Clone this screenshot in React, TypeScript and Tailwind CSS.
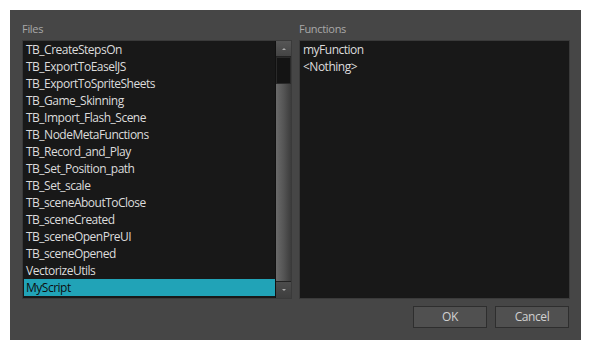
import React from "react";

const files = [
  "TB_CreateStepsOn",
  "TB_ExportToEaselJS",
  "TB_ExportToSpriteSheets",
  "TB_Game_Skinning",
  "TB_Import_Flash_Scene",
  "TB_NodeMetaFunctions",
  "TB_Record_and_Play",
  "TB_Set_Position_path",
  "TB_Set_scale",
  "TB_sceneAboutToClose",
  "TB_sceneCreated",
  "TB_sceneOpenPreUI",
  "TB_sceneOpened",
  "VectorizeUtils",
  "MyScript",
];

export default function App() {
  return (
    <div className="w-[591px] h-[351px] bg-white p-[10px]" style={{ fontFamily: '"Open Sans", "Noto Sans", sans-serif' }}>
      <div className="w-[571px] h-[330px] bg-[#464646] pt-[12px] pl-[12px] pr-[11px] flex flex-col">
        <div className="flex gap-[7px]">
          <div className="w-[270px] flex flex-col">
            <div className="h-[18px] text-[11px] leading-[14px] text-[#a9a9a9] tracking-[-0.3px]">Files</div>
            <div className="h-[259px] bg-[#181818] border border-[#3a3a3a] flex">
              <div className="flex-1 flex flex-col pl-[1px]">
                {files.map((f, i) => (
                  <div
                    key={f}
                    className={
                      "h-[17px] px-[2px] text-[12px] leading-[17px] tracking-[-0.5px] whitespace-nowrap " +
                      (i === files.length - 1 ? "bg-[#21a3b7] text-[#0e0e0e]" : "text-[#dcdcdc]")
                    }
                  >
                    {f}
                  </div>
                ))}
              </div>
              <div className="w-[16px] flex flex-col border-l border-[#111]">
                <div className="h-[16px] bg-gradient-to-b from-[#565656] to-[#444] border-b border-[#222] flex items-center justify-center">
                  <div className="w-0 h-0 border-l-[2px] border-r-[2px] border-b-[2px] border-l-transparent border-r-transparent border-b-[#aaa]" />
                </div>
                <div className="h-[27px] bg-[#141414] border border-[#2a2a2a]" />
                <div className="flex-1 bg-gradient-to-r from-[#6a6a6a] via-[#555] to-[#3c3c3c]" />
                <div className="h-[17px] bg-gradient-to-b from-[#4c4c4c] to-[#3e3e3e] border-t border-[#222] flex items-center justify-center">
                  <div className="w-0 h-0 border-l-[2px] border-r-[2px] border-t-[2px] border-l-transparent border-r-transparent border-t-[#aaa]" />
                </div>
              </div>
            </div>
          </div>
          <div className="w-[271px] flex flex-col">
            <div className="h-[18px] text-[11px] leading-[14px] text-[#a9a9a9] tracking-[-0.3px]">Functions</div>
            <div className="h-[259px] bg-[#181818] border border-[#3a3a3a] pl-[3px] flex flex-col">
              <div className="h-[17px] text-[12px] leading-[17px] text-[#dcdcdc] tracking-[-0.5px]">myFunction</div>
              <div className="h-[17px] text-[12px] leading-[17px] text-[#dcdcdc] tracking-[-0.5px]">&lt;Nothing&gt;</div>
            </div>
          </div>
        </div>
        <div className="flex justify-end gap-[8px] mt-[7px] pr-[1px]">
          <button className="w-[74px] h-[22px] bg-[#505050] border border-[#2e2e2e] text-[12px] text-[#d0d0d0] tracking-[-0.4px]">OK</button>
          <button className="w-[74px] h-[22px] bg-[#505050] border border-[#2e2e2e] text-[12px] text-[#d0d0d0] tracking-[-0.4px]">Cancel</button>
        </div>
      </div>
    </div>
  );
}
